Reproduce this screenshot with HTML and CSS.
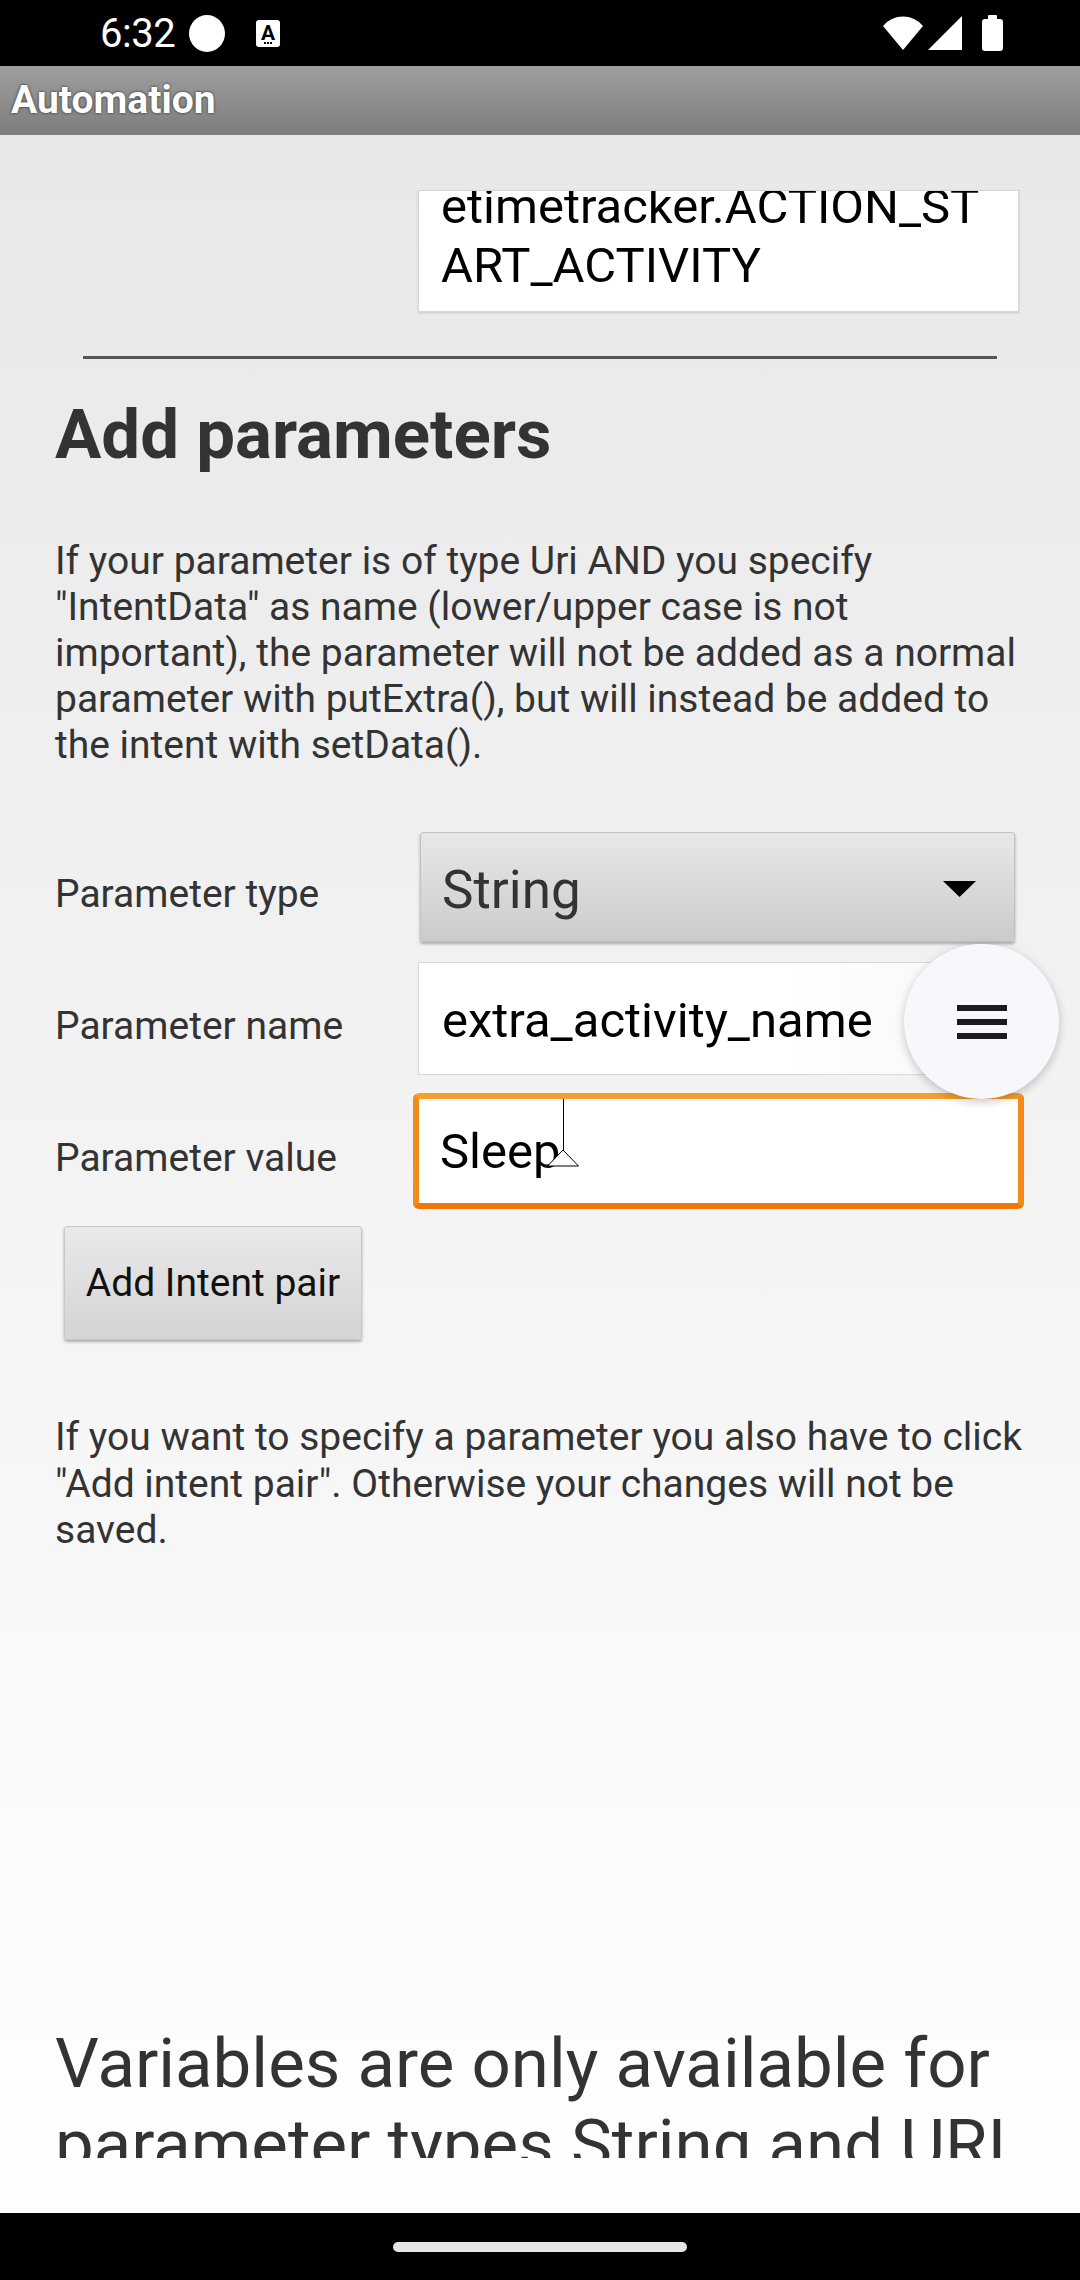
FILE: index.html
```html
<!DOCTYPE html>
<html lang="en">
<head>
<meta charset="utf-8">
<title>Automation</title>
<link rel="stylesheet" href="styles.css">
</head>
<body>
<div class="status">
  <div class="status-left">
    <span class="clock">6:32</span>
    <svg class="ic-dot" width="36" height="37" viewBox="0 0 36 37"><ellipse cx="18" cy="18.5" rx="18" ry="18.5" fill="#fff"/></svg>
    <svg class="ic-a" width="24" height="27" viewBox="0 0 24 27"><rect width="24" height="27" rx="3" fill="#fff"/><text x="12" y="20" font-family="Roboto, sans-serif" font-size="21" font-weight="700" text-anchor="middle" fill="#000">A</text><rect x="8" y="22" width="2" height="2" fill="#000"/><rect x="11" y="22" width="2" height="2" fill="#000"/><rect x="14" y="22" width="2" height="2" fill="#000"/></svg>
  </div>
  <div class="status-right">
    <svg class="ic-wifi" width="40" height="34" viewBox="0 0 40 34"><path d="M20 34 L0 10 A26 26 0 0 1 40 10 Z" fill="#fff"/></svg>
    <svg class="ic-signal" width="34" height="34" viewBox="0 0 34 34"><path d="M34 0 V34 H0 Z" fill="#fff"/></svg>
    <svg class="ic-battery" width="21" height="36" viewBox="0 0 21 36"><rect x="6" y="0" width="9" height="6" rx="1" fill="#fff"/><rect x="0" y="4" width="21" height="32" rx="3" fill="#fff"/></svg>
  </div>
</div>
<header class="appbar"><h1>Automation</h1></header>
<main class="scroll">
  <div class="action-field"><div class="action-text">etimetracker.ACTION_START_ACTIVITY</div></div>
  <hr class="divider">
  <h2 class="heading">Add parameters</h2>
  <p class="note">If your parameter is of type Uri AND you specify "IntentData" as name (lower/upper case is not important), the parameter will not be added as a normal parameter with putExtra(), but will instead be added to the intent with setData().</p>
  <div class="form">
    <div class="row">
      <label class="label">Parameter type</label>
      <div class="spinner"><span>String</span><svg width="33" height="16" viewBox="0 0 33 16"><path d="M0 0 H33 L16.5 16 Z" fill="#000"/></svg></div>
    </div>
    <div class="row row-name">
      <label class="label">Parameter name</label>
      <div class="field">extra_activity_name</div>
    </div>
    <div class="row row-value">
      <label class="label">Parameter value</label>
      <div class="field focused">Sleep<span class="caret"><svg width="34" height="68" viewBox="0 0 34 68"><line x1="17.5" y1="0" x2="17.5" y2="52" stroke="#000" stroke-width="1"/><path d="M17 51 L1.5 67 H32.5 Z" fill="#fff" stroke="#000" stroke-width="1"/></svg></span></div>
    </div>
  </div>
  <button class="add-btn">Add Intent pair</button>
  <p class="note note2">If you want to specify a parameter you also have to click "Add intent pair". Otherwise your changes will not be saved.</p>
  <p class="vars">Variables are only available for parameter types String and URI</p>
</main>
<div class="gap"></div>
<nav class="navbar"><span class="pill"></span></nav>
<button class="fab" aria-label="Menu"><svg width="50" height="34" viewBox="0 0 50 34"><rect y="0" width="50" height="6" fill="#1c1b1f"/><rect y="14" width="50" height="6" fill="#1c1b1f"/><rect y="28" width="50" height="6" fill="#1c1b1f"/></svg></button>
</body>
</html>
```

FILE: styles.css
```css
* {
  box-sizing: border-box;
  margin: 0;
  padding: 0;
}

html, body {
  width: 1080px;
  height: 2280px;
}

body {
  position: relative;
  overflow: hidden;
  font-family: Roboto, "Noto Sans", sans-serif;
  background: #fdfdfd;
}

/* status bar */
.status {
  height: 66px;
  background: #000;
  color: #fff;
  display: flex;
  align-items: center;
  padding: 0 77px 0 100px;
}

.status-left,
.status-right {
  display: flex;
  align-items: center;
}

.status-right {
  margin-left: auto;
}

.clock {
  font-size: 40px;
  line-height: 66px;
  padding-top: 2px;
  letter-spacing: -0.5px;
}

.ic-dot {
  margin-left: 14px;
}

.ic-a {
  margin-left: 31px;
}

.ic-signal {
  margin-left: 5px;
}

.ic-battery {
  margin-left: 20px;
}

/* app bar */
.appbar {
  height: 69px;
  background: linear-gradient(#9e9e9e, #7d7d7d);
  padding-left: 11px;
}

.appbar h1 {
  font-size: 39px;
  font-weight: 700;
  line-height: 69px;
  color: #fff;
  text-shadow: 0 0 3px rgba(0, 0, 0, 0.75);
}

/* scrolling content */
.scroll {
  display: block;
  height: 2023px;
  overflow: hidden;
  background: linear-gradient(#e8e8e8, #fefefe);
  padding: 55px 55px 0 55px;
}

.action-field {
  margin-left: 363px;
  width: 601px;
  height: 122px;
  background: #fff;
  border: 1px solid #d6d6d6;
  box-shadow: 0 1px 2px rgba(0, 0, 0, 0.15);
  overflow: hidden;
  padding: 0 11px 0 22px;
}

.action-text {
  margin-top: -14px;
  font-size: 49px;
  line-height: 59px;
  color: #000;
  word-break: break-all;
}

.divider {
  margin: 44px 0 0 28px;
  width: 914px;
  height: 3px;
  border: 0;
  background: #555;
}

.heading {
  margin-top: 36px;
  font-size: 69px;
  line-height: 80px;
  font-weight: 700;
  color: #333;
}

.note {
  margin-top: 63px;
  font-size: 39px;
  line-height: 46px;
  color: #333;
}

.note2 {
  margin-top: 74px;
  line-height: 46.5px;
}

.form {
  margin-top: 64px;
}

.row {
  display: flex;
  align-items: center;
}

.row-name {
  margin-top: 20px;
}

.row-value {
  margin-top: 18px;
}

.label {
  width: 363px;
  flex: none;
  font-size: 39px;
  line-height: 46px;
  padding-top: 14px;
  color: #333;
}

.spinner {
  width: 595px;
  height: 110px;
  margin-left: 2px;
  display: flex;
  align-items: center;
  justify-content: space-between;
  padding: 6px 38px 0 21px;
  background: linear-gradient(#e8e8e8, #cbcbcb);
  border: 1px solid #c2c2c2;
  border-radius: 3px;
  box-shadow: 0 2px 3px rgba(0, 0, 0, 0.3);
  font-size: 53px;
  line-height: 62px;
  color: #333;
}

.spinner svg {
  margin-top: -3px;
}

.field {
  width: 601px;
  height: 113px;
  display: flex;
  align-items: center;
  padding: 4px 22px 0 23px;
  background: linear-gradient(90deg, #fff 60%, #f6f6f6);
  border: 1px solid #d9d9d9;
  font-size: 49px;
  line-height: 59px;
  color: #000;
}

.field.focused {
  width: 611px;
  height: 116px;
  margin-left: -5px;
  padding: 0 22px 0 21px;
  background: #fff;
  border: 6px solid #f38b18;
  border-top-color: #f89e2c;
  border-bottom-color: #ef780a;
  border-radius: 6px;
}

.caret {
  position: relative;
  display: inline-block;
  width: 0;
  height: 0;
}

.caret svg {
  position: absolute;
  left: -15px;
  top: -52px;
}

.add-btn {
  display: block;
  margin: 17px 0 0 9px;
  width: 298px;
  height: 114px;
  font-family: Roboto, "Noto Sans", sans-serif;
  font-size: 39px;
  color: #111;
  background: linear-gradient(#e9e9e9, #d4d4d4);
  border: 1px solid #c8c8c8;
  border-radius: 3px;
  box-shadow: 0 2px 3px rgba(0, 0, 0, 0.3);
}

.vars {
  margin-top: 469px;
  font-size: 69px;
  line-height: 81px;
  color: #333;
}

.gap {
  height: 55px;
  background: #fdfdfd;
}

.navbar {
  height: 67px;
  background: #000;
  display: flex;
  justify-content: center;
  padding-top: 29px;
}

.pill {
  display: block;
  width: 294px;
  height: 10px;
  border-radius: 5px;
  background: #e6e6e6;
}

/* floating action button overlays the form */
.fab {
  position: absolute;
  left: 904px;
  top: 944px;
  width: 155px;
  height: 155px;
  border: 0;
  border-radius: 50%;
  background: #f7f7fc;
  box-shadow: 0 3px 10px rgba(0, 0, 0, 0.22);
  display: flex;
  align-items: center;
  justify-content: center;
}
```
